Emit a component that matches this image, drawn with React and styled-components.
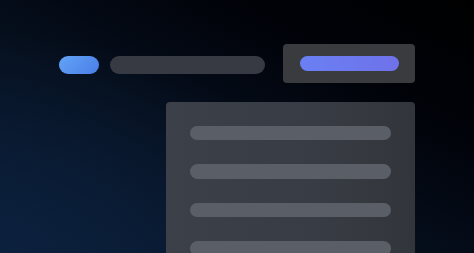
import React from "react";
import styled, { createGlobalStyle } from "styled-components";

const Global = createGlobalStyle`
  html, body { margin: 0; padding: 0; background: #000; }
  body { font-family: "Inter", "Liberation Sans", sans-serif; }
`;

const Stage = styled.div`
  width: 474px;
  height: 253px;
  overflow: hidden;
  box-sizing: border-box;
  padding: 44px 0 0 59px;
  background:
    radial-gradient(ellipse 320px 220px at 0% 100%, rgba(12, 34, 64, 0.8), rgba(12, 34, 64, 0) 100%),
    linear-gradient(to top right, #0a1c36 0%, #06101f 40%, #01030a 72%, #000 100%);
  display: flex;
  flex-direction: column;
`;

const TopRow = styled.div`
  display: flex;
  align-items: flex-start;
`;

const Pill = styled.div`
  width: ${(p) => p.$w}px;
  height: ${(p) => p.$h}px;
  border-radius: ${(p) => p.$h / 2}px;
  margin-top: ${(p) => p.$top || 0}px;
  margin-right: ${(p) => p.$gap || 0}px;
  background: ${(p) => p.$bg};
  flex-shrink: 0;
`;

const ButtonBox = styled.div`
  width: 132px;
  height: 39px;
  box-sizing: border-box;
  border-radius: 4px;
  background: #3a3b3f;
  padding: 12px 0 0 17px;
  flex-shrink: 0;
`;

const Panel = styled.div`
  margin: 19px 0 0 107px;
  width: 249px;
  height: 200px;
  flex-shrink: 0;
  box-sizing: border-box;
  border-radius: 4px 4px 0 0;
  background: linear-gradient(to right, #3b4049 0%, #383c44 60%, #32353b 100%);
  padding: 23.5px 0 0 24px;
  display: flex;
  flex-direction: column;
  gap: 24px;
`;

const Line = styled.div`
  width: 201px;
  height: 14.5px;
  border-radius: 7.5px;
  background: #5a5e66;
  flex-shrink: 0;
`;

export default function App() {
  return (
    <>
      <Global />
      <Stage>
        <TopRow>
          <Pill
            $w={40}
            $h={18}
            $top={12}
            $gap={11}
            $bg="linear-gradient(135deg, #62a4f8, #4a7ee6)"
          />
          <Pill $w={155} $h={18} $top={12} $gap={18} $bg="#373a42" />
          <ButtonBox>
            <Pill
              $w={99}
              $h={15}
              $bg="linear-gradient(90deg, #6a80f2, #6f72ea)"
            />
          </ButtonBox>
        </TopRow>
        <Panel>
          <Line />
          <Line />
          <Line />
          <Line />
        </Panel>
      </Stage>
    </>
  );
}
